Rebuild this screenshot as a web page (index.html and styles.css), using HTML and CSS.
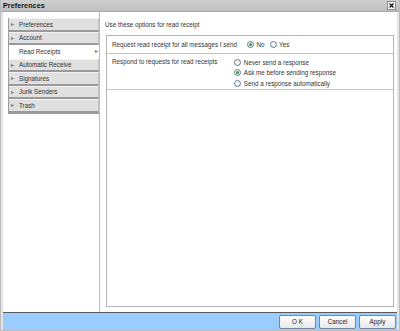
FILE: index.html
```html
<!DOCTYPE html>
<html>
<head>
<meta charset="utf-8">
<link rel="stylesheet" href="styles.css">
</head>
<body>
<div class="window">
  <div class="titlebar">
    <span class="title">Preferences</span>
    <span class="close"><svg width="9" height="9" viewBox="0 0 9 9"><path d="M2 2 L7 7 M7 2 L2 7" stroke="#111" stroke-width="1.6"/></svg></span>
  </div>
  <div class="main">
    <div class="side">
      <ul class="nav">
        <li class="item"><span class="arr">&#9656;</span>Preferences</li>
        <li class="item"><span class="arr">&#9656;</span>Account</li>
        <li class="item sel"><span class="arr"></span>Read Receipts<span class="rarr">&#9656;</span></li>
        <li class="item"><span class="arr">&#9656;</span>Automatic Receive</li>
        <li class="item"><span class="arr">&#9656;</span>Signatures</li>
        <li class="item"><span class="arr">&#9656;</span>Junk Senders</li>
        <li class="item"><span class="arr">&#9656;</span>Trash</li>
      </ul>
    </div>
    <div class="panel">
      <div class="intro">Use these options for read receipt</div>
      <div class="box">
        <div class="row row1">
          <span class="label">Request read receipt for all messages I send</span>
          <span class="opts-inline">
            <span class="opt"><span class="radio on"></span>No</span>
            <span class="opt"><span class="radio"></span>Yes</span>
          </span>
        </div>
        <div class="row row2">
          <span class="label">Respond to requests for read receipts</span>
          <span class="opts-col">
            <span class="opt"><span class="radio"></span>Never send a response</span>
            <span class="opt"><span class="radio on"></span>Ask me before sending response</span>
            <span class="opt"><span class="radio"></span>Send a response automatically</span>
          </span>
        </div>
      </div>
    </div>
  </div>
  <div class="footer">
    <button class="btn">O K</button>
    <button class="btn">Cancel</button>
    <button class="btn">Apply</button>
  </div>
</div>
</body>
</html>
```

FILE: styles.css
```css
* { box-sizing: border-box; }
html, body { margin: 0; padding: 0; }
body {
  width: 400px;
  height: 331px;
  overflow: hidden;
  font-family: "Liberation Sans", Arial, sans-serif;
  font-size: 6.3px;
  color: #333;
  background: #dcdcdc;
}
.window {
  width: 400px;
  height: 331px;
  display: flex;
  flex-direction: column;
  background: #e4e4e4;
  border: 1px solid #bdbdbd;
  border-top: none;
}
.titlebar {
  height: 12px;
  flex: none;
  display: flex;
  align-items: center;
  justify-content: space-between;
  padding: 0 2px 0 2px;
  background: linear-gradient(#cfcfcf, #bfbfbf);
  border-bottom: 1px solid #aaaaaa;
}
.title {
  font-weight: bold;
  font-size: 7.1px;
  color: #111;
  letter-spacing: 0.1px;
}
.close {
  width: 9px;
  height: 9px;
  background: #f8f8f8;
  border: 1px solid #8a8a8a;
  display: flex;
  align-items: center;
  justify-content: center;
  margin-right: 1px;
}
.close svg { width: 7px; height: 7px; display: block; }
.main {
  flex: 1;
  display: flex;
  margin: 0 2px 0 2px;
  background: #fff;
  border-bottom: 1px solid #5a5a5a;
}
.side {
  width: 97px;
  flex: none;
  padding: 6px 0 0 5px;
  border-right: 1px solid #bcbcbc;
}
.nav {
  list-style: none;
  margin: 0;
  padding: 0;
  border-left: 1px solid #9c9c9c;
  border-bottom: 1px solid #9c9c9c;
}
.item {
  height: 13.5px;
  display: flex;
  align-items: center;
  background: #e0e0e0;
  border-top: 1px solid #f2f2f2;
  border-bottom: 2px solid #9a9a9a;
  border-right: 1px solid #c4c4c4;
}
.item.sel {
  background: #fff;
  border-top-color: #fff;
  border-bottom-color: #fff;
  border-right-color: #fff;
}
.arr {
  width: 10px;
  padding-left: 2px;
  font-size: 5.5px;
  color: #777;
  flex: none;
}
.rarr {
  margin-left: auto;
  margin-right: 0;
  font-size: 5.5px;
  color: #777;
}
.panel {
  flex: 1;
  display: flex;
  flex-direction: column;
  padding: 8px 3px 5px 6px;
}
.intro {
  line-height: 9px;
  margin-left: -1px;
}
.box {
  flex: 1;
  margin-top: 6px;
  border: 1px solid #b4b4b4;
}
.row {
  display: flex;
  border-bottom: 1px solid #c4c4c4;
  padding-left: 5px;
}
.row1 {
  height: 18px;
  align-items: center;
  gap: 10px;
}
.row2 {
  height: 36px;
  padding-top: 3px;
  gap: 17px;
}
.label { line-height: 9px; }
.opts-inline {
  display: flex;
  gap: 5px;
}
.opts-col {
  display: flex;
  flex-direction: column;
}
.opt {
  display: flex;
  align-items: center;
  height: 10.5px;
}
.radio {
  width: 7px;
  height: 7px;
  border-radius: 50%;
  border: 1px solid #5f7a95;
  background: radial-gradient(circle at 35% 35%, #ffffff, #e6e6e6);
  margin-right: 2.5px;
  display: flex;
  align-items: center;
  justify-content: center;
}
.radio.on::after {
  content: "";
  width: 3px;
  height: 3px;
  border-radius: 50%;
  background: #2aa22a;
}
.footer {
  height: 17px;
  flex: none;
  margin: 0 2px;
  background: #99ccff;
  display: flex;
  justify-content: flex-end;
  align-items: center;
  gap: 3px;
  padding-right: 1px;
}
.btn {
  width: 37px;
  height: 14px;
  padding: 0;
  font-family: "Liberation Sans", Arial, sans-serif;
  font-size: 6.3px;
  color: #222;
  background: linear-gradient(#ffffff, #e8e8e8);
  border: 1px solid #6e8aa6;
  border-radius: 2px;
}
```
